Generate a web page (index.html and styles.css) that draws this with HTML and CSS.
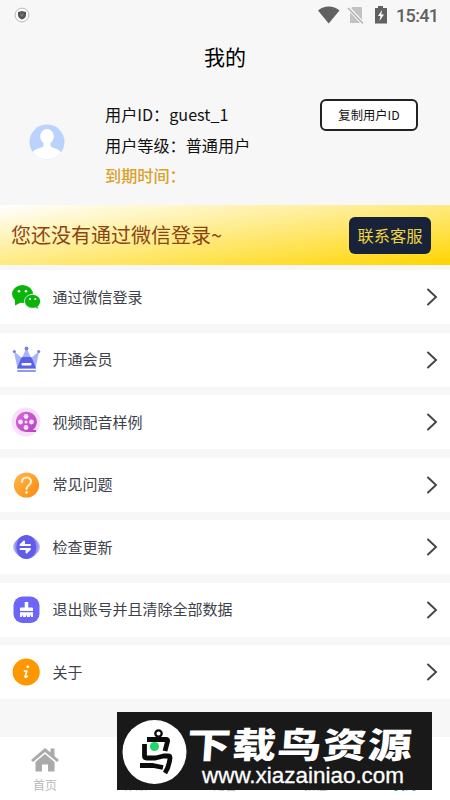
FILE: index.html
```html
<!DOCTYPE html>
<html lang="zh-CN">
<head>
<meta charset="utf-8">
<title>我的</title>
<link rel="stylesheet" href="styles.css">
</head>
<body>
<div class="app">
  <div class="status">
    <svg class="shield" width="16" height="16" viewBox="0 0 16 16"><circle cx="8" cy="8" r="6.900" fill="#fafafa" stroke="#aaa" stroke-width=".8"/><path d="M8 4 12 5v3c0 2-1.500 3.500-4 4.600C5.500 11.500 4 10 4 8V5z" fill="#555"/><path d="M6.800 6.500 8 9.300 9.200 6.500" fill="none" stroke="#999" stroke-width=".7"/></svg>
    <svg width="122" height="22" viewBox="318 4 122 22">
      <path d="M318 10.500c6-5.300 15.500-5.300 21.500 0L328.700 23.500z" fill="#616161"/>
      <path d="M352 7h9q1 0 1 1v15h-12V11z" fill="#c2c2c2"/><path d="m348 7.500 15 16" stroke="#f8f8f8" stroke-width="3.500"/><path d="m348 8 15 15.500" stroke="#b2b2b2" stroke-width="1.500"/>
      <path d="M375 8h3V6h5v2h4v15.500h-12z" fill="#616161"/><path d="m382 10-4 6h2.500l-1 5 4.500-6.500h-2.700z" fill="#fff"/>
      <text class="clock" x="396" y="22" textLength="43">15:41</text>
    </svg>
  </div>
  <h1 class="title">我的</h1>
  <section class="profile">
    <svg class="avatar" width="36" height="36" viewBox="0 0 36 36"><defs><clipPath id="face"><circle cx="18" cy="18" r="17.500"/></clipPath></defs><circle cx="18" cy="18" r="17.500" fill="#b9d3fc"/><g clip-path="url(#face)" fill="#fff"><ellipse cx="18" cy="12.500" rx="6.800" ry="7.600"/><path d="M14.500 17h7v5c1 2 9 2.500 11 7v8H3v-8c2-4.500 10.500-5 11.500-7z"/></g></svg>
    <div class="info">
      <p>用户ID：guest_1</p>
      <p>用户等级：普通用户</p>
      <p class="expire">到期时间：</p>
    </div>
    <button class="copy">复制用户ID</button>
  </section>
  <section class="banner"><span>您还没有通过微信登录~</span><button class="service">联系客服</button></section>
  <ul class="menu">
    <li>
      <svg class="icon" viewBox="0 0 30 30"><g fill="#09b40b"><ellipse cx="11.500" cy="12" rx="10.500" ry="9"/><path d="m4 17 0 6.500 6-3z"/></g><path d="M29.500 19.300c0-4-3.700-6.900-8-6.900s-8 2.900-8 6.900 3.700 7 8 7c1 0 2-.2 3-.5l3.300 1.800-.8-3c1.700-1.500 2.500-3.300 2.500-5.300z" fill="#09b40b" stroke="#fff" stroke-width=".8"/><g fill="#fff"><circle cx="8" cy="9.300" r="1.300"/><circle cx="15" cy="9.300" r="1.300"/><circle cx="19" cy="17" r="1.100"/><circle cx="24.300" cy="17" r="1.100"/></g></svg>
      <span>通过微信登录</span><svg class="arrow" viewBox="0 0 12 18"><path d="m2 1.500 8 7.500-8 7.500"/></svg></li>
    <li>
      <svg class="icon" viewBox="0 0 30 30"><path d="m2.800 6 8 7 4.700-10 4.700 10 8-7-3.700 17.500h-18z" fill="#a9b4f8"/><g fill="#7781e8"><circle cx="3.300" cy="6.500" r="1.600"/><circle cx="15.500" cy="3.500" r="1.900"/><circle cx="27.700" cy="6.500" r="1.600"/></g><path d="m12 12h7q1.500 0 2 1.300l4 10.200H6l4-10.200q.5-1.300 2-1.300z" fill="#5961e8"/><rect x="10.500" y="18" width="10" height="2.600" rx="1" fill="#fff"/><rect x="6" y="25" width="19" height="2" rx="1" fill="#8d98ef"/></svg>
      <span>开通会员</span><svg class="arrow" viewBox="0 0 12 18"><path d="m2 1.500 8 7.500-8 7.500"/></svg></li>
    <li>
      <svg class="icon" viewBox="0 0 30 30"><defs><linearGradient id="reel" x1="0" y1="0" x2="1" y2="1"><stop stop-color="#d76bda"/><stop offset="1" stop-color="#b83fc4"/></linearGradient></defs><circle cx="15" cy="15" r="14.500" fill="#fae0fb"/><path d="M15 4.700a10.200 10.200 0 1 0 0 20.400h10v-2h-3.300A10.200 10.200 0 0 0 15 4.700z" fill="url(#reel)"/><g fill="#fce7fd"><circle cx="15" cy="9.500" r="2.400"/><circle cx="9.500" cy="15" r="2.400"/><circle cx="20.500" cy="15" r="2.400"/><circle cx="15" cy="20.500" r="2.400"/><circle cx="15" cy="15" r="1.500"/></g></svg>
      <span>视频配音样例</span><svg class="arrow" viewBox="0 0 12 18"><path d="m2 1.500 8 7.500-8 7.500"/></svg></li>
    <li>
      <svg class="icon" viewBox="0 0 30 30"><defs><linearGradient id="help" x1="0" y1="0" x2="1" y2="1"><stop stop-color="#ffb84c"/><stop offset="1" stop-color="#fb8810"/></linearGradient></defs><circle cx="15.500" cy="15" r="12.600" fill="url(#help)"/><path d="M11 12c0-6 9-6 9-.5 0 3.500-4.500 3.800-4.500 7.500" fill="none" stroke="#fff2cf" stroke-width="2" stroke-linecap="round"/><circle cx="15.500" cy="22.500" r="1.400" fill="#fff2cf"/></svg>
      <span>常见问题</span><svg class="arrow" viewBox="0 0 12 18"><path d="m2 1.500 8 7.500-8 7.500"/></svg></li>
    <li>
      <svg class="icon" viewBox="0 0 30 30"><ellipse cx="15.500" cy="15" rx="13.500" ry="10" fill="#bdbdfa"/><ellipse cx="15.500" cy="15" rx="12" ry="11.500" fill="#9291f5"/><ellipse cx="15.300" cy="15" rx="10" ry="12" fill="#605be9"/><path d="M19 13H9.500l3.500-3.500V13M9.500 17H19l-3.500 3.500V17" fill="#fff" stroke="#fff" stroke-width="1.900" stroke-linejoin="round" stroke-linecap="round"/></svg>
      <span>检查更新</span><svg class="arrow" viewBox="0 0 12 18"><path d="m2 1.500 8 7.500-8 7.500"/></svg></li>
    <li>
      <svg class="icon" viewBox="0 0 30 30"><rect x="2.500" y="1.500" width="26" height="26.500" rx="9" fill="#6c65f7"/><path d="M13.700 7h3.500v5.500h3.800q1 0 1 1V16H9v-2.500q0-1 1-1h3.700zM9 17.200h13V22h-2v-1.500h-1V22h-3v-1.500h-1V22h-3v-1.500h-1V22H9z" fill="#fff"/></svg>
      <span>退出账号并且清除全部数据</span><svg class="arrow" viewBox="0 0 12 18"><path d="m2 1.500 8 7.500-8 7.500"/></svg></li>
    <li>
      <svg class="icon" viewBox="0 0 30 30"><circle cx="15.200" cy="15" r="13.600" fill="#ff9800"/><circle cx="16.800" cy="9.800" r="1.400" fill="#fff"/><path d="M13.500 14h2.300l-1.600 5.500q-.3 1.300 1.900-.2" fill="none" stroke="#fff" stroke-width="1.700" stroke-linecap="round" stroke-linejoin="round"/></svg>
      <span>关于</span><svg class="arrow" viewBox="0 0 12 18"><path d="m2 1.500 8 7.500-8 7.500"/></svg></li>
  </ul>
  <nav class="tabs">
    <div class="tab"><svg width="28" height="25" viewBox="0 0 28 25"><path d="M14 1 0 13l2 2L14 5l12 10 2-2-4.500-4V1.500h-4v4z" fill="#aaa"/><path d="M14 7 4.500 15v9.500h6.500v-7h6v7h6.500V15z" fill="#aaa"/></svg><span>首页</span></div>
    <div class="tab"><span>作品</span></div>
    <div class="tab"><span>配音</span></div>
    <div class="tab"><span>教程</span></div>
    <div class="tab active"><span>我的</span></div>
  </nav>
  <div class="brand">
    <svg width="315" height="78" viewBox="117 712 315 78">
      <circle cx="154.500" cy="752" r="32" fill="#fff"/>
      <g fill="none" stroke="#0b0b0b" stroke-width="4.800" stroke-linejoin="round"><circle cx="158.500" cy="733.500" r="3.200" stroke-width="2.300"/><path d="M147 739.500h19q2 0 1.500 2L165 751M144.500 744v12q0 2 2 2h9l8-2h4.500q2 0 2 2-1 9-5 15M140 765.500h13l10 2"/></g><circle cx="154.500" cy="746.500" r="4.500" fill="#20d866"/>
      <text class="brand-name" transform="translate(186 758) skewX(-4) scale(1.160 .93)" textLength="194" lengthAdjust="spacing">下载鸟资源</text>
      <text class="brand-url" x="202" y="782.500" textLength="202" lengthAdjust="spacingAndGlyphs">www.xiazainiao.com</text>
    </svg>
  </div>
</div>
</body>
</html>
```
FILE: styles.css
```css
* { box-sizing: border-box; margin: 0; padding: 0; }
body { width: 450px; height: 800px; overflow: hidden; font-family: "Noto Sans CJK SC", sans-serif; background: #f7f7f7; color: #111; }
button { font-family: inherit; }
.app { position: relative; height: 800px; display: flex; flex-direction: column; }
.status { height: 30px; padding: 4px 10px 0 14px; display: flex; justify-content: space-between; }
.shield { margin-top: 3px; }
.clock { font: 500 18px Roboto, sans-serif; fill: #616161; }
.title { height: 54px; line-height: 52px; text-align: center; font-size: 21px; font-weight: 400; color: #000; }
.profile { height: 121px; display: flex; padding: 15px 32px 0 29px; }
.avatar { margin-top: 25px; }
.info { flex: 1; margin-left: 40px; font-size: 16.150px; }
.info p { height: 31px; line-height: 31px; white-space: nowrap; }
.info .expire { color: #daa12b; font-weight: 500; line-height: 29px; }
.copy { width: 98px; height: 32px; border: 2px solid #222; border-radius: 6px; background: #fff; font-size: 12.300px; color: #111; }
.banner { height: 60px; padding: 0 19px 0 11px; display: flex; align-items: center; justify-content: space-between; background: linear-gradient(to bottom right, #fff, #ffd500); color: #8b4513; font-size: 20px; }
.banner span { padding-bottom: 1px; }
.service { width: 82px; height: 37px; border: 0; border-radius: 6px; background: #18233a; color: #f0d43c; font-size: 16.300px; padding-bottom: 1px; }
.menu { list-style: none; padding-top: 5px; display: flex; flex-direction: column; gap: 8.500px; }
.menu li { height: 54px; padding: 0 12px 0 11px; background: #fff; display: flex; align-items: center; font-size: 15px; color: #3c414a; }
.menu span { padding-bottom: 2px; }
.icon { width: 30px; height: 30px; margin-right: 11.500px; }
.arrow { width: 12px; height: 18px; margin-left: auto; fill: none; stroke: #444; stroke-width: 1.900; stroke-linecap: round; }
.tabs { height: 63px; margin-top: auto; background: #fff; display: flex; }
.tab { flex: 1; display: flex; flex-direction: column; align-items: center; justify-content: flex-end; padding-bottom: 6px; color: #b8b8b8; font-size: 12px; line-height: 18px; }
.tab svg { margin-bottom: 4px; }
.tab.active { color: #2899bb; }
.brand { position: absolute; left: 117px; top: 712px; width: 315px; height: 78px; background: #191919; }
.brand svg { display: block; }
.brand-name { font: 900 38px "Noto Sans CJK SC", sans-serif; fill: #fff; }
.brand-url { font: 22px "Liberation Sans", sans-serif; fill: #fff; stroke: #fff; stroke-width: .3; }
```
